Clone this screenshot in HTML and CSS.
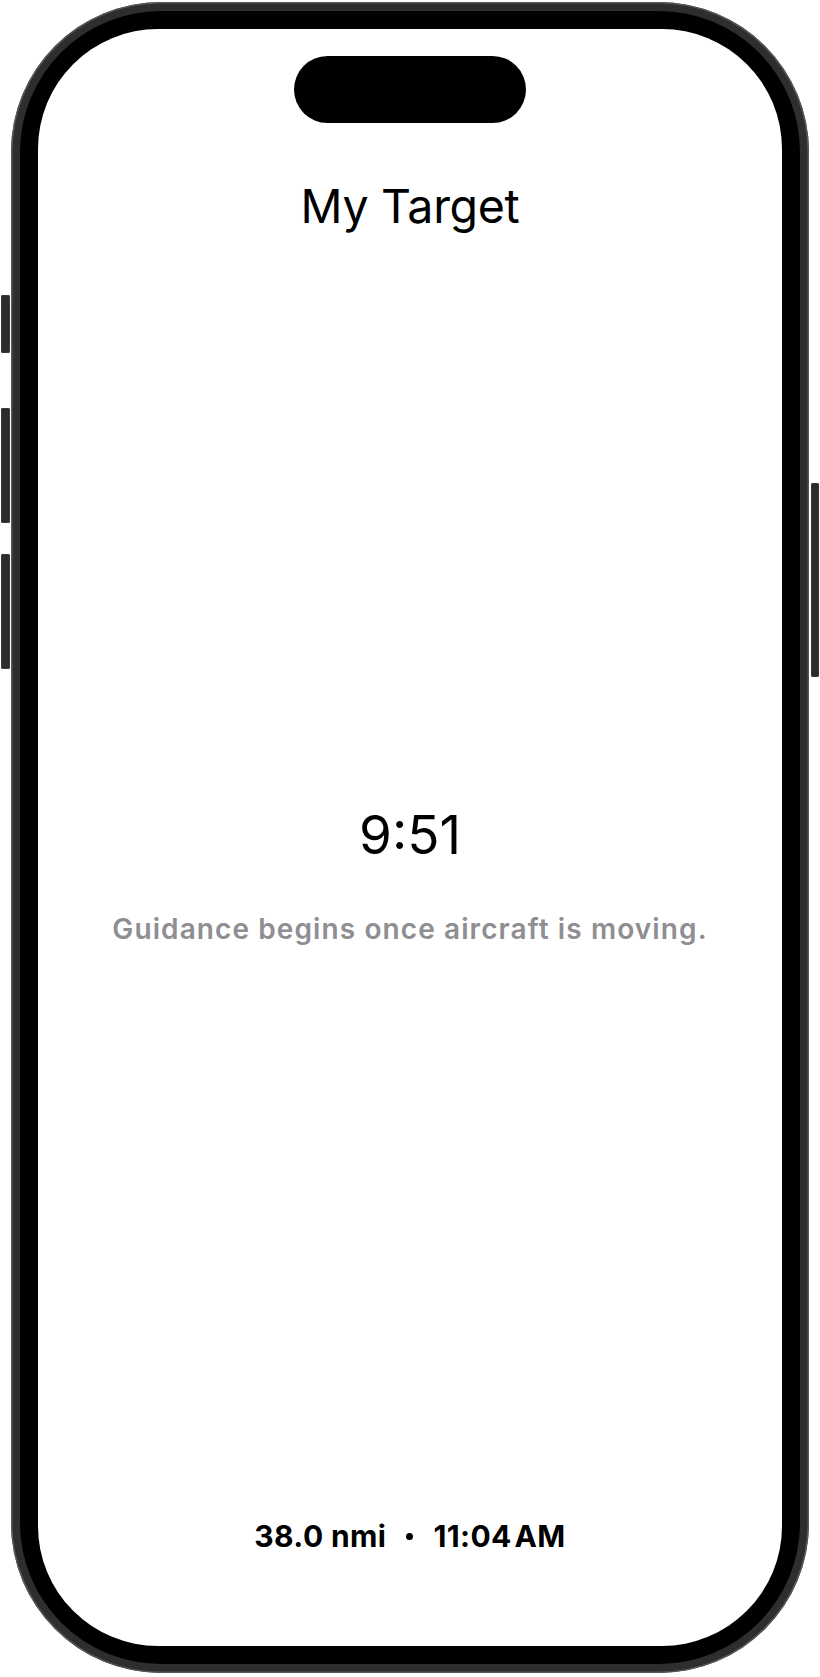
FILE: index.html
```html
<!DOCTYPE html>
<html lang="en">
<head>
<meta charset="utf-8">
<title>My Target</title>
<link rel="stylesheet" href="styles.css">
</head>
<body>
<div class="device">
  <span class="btn btn-action"></span>
  <span class="btn btn-vol-up"></span>
  <span class="btn btn-vol-down"></span>
  <span class="btn btn-power"></span>
  <div class="bezel">
    <div class="screen">
      <div class="island"></div>
      <h1 class="title">My Target</h1>
      <main class="main">
        <div class="countdown">9:51</div>
        <p class="hint">Guidance begins once aircraft is moving.</p>
      </main>
      <footer class="footer">
        <span>38.0 nmi</span>
        <span class="dot"></span>
        <span>11:04&#8202;AM</span>
      </footer>
    </div>
  </div>
</div>
</body>
</html>
```

FILE: styles.css
```css
html, body {
  margin: 0;
  padding: 0;
  background: #ffffff;
}

body {
  width: 820px;
  height: 1677px;
  font-family: "Inter", "Liberation Sans", sans-serif;
  padding-top: 2px;
  box-sizing: border-box;
}

.device {
  position: relative;
  margin-left: 11px;
  width: 798px;
  height: 1671px;
  box-sizing: border-box;
  padding: 9px;
  border-radius: 150px;
  background: #2e2e2e;
  box-shadow: inset 0 0 0 1.5px #575757;
}

.btn {
  position: absolute;
  background: #2c2c2c;
  border-radius: 2px;
  box-shadow: inset 0 0 0 1px #3a3a3a;
}
.btn-action { left: -10px; top: 293px; width: 9px; height: 58px; }
.btn-vol-up { left: -10px; top: 406px; width: 9px; height: 115px; }
.btn-vol-down { left: -10px; top: 552px; width: 9px; height: 115px; }
.btn-power { left: 800px; top: 481px; width: 8px; height: 194px; }

.bezel {
  height: 100%;
  box-sizing: border-box;
  padding: 18px;
  border-radius: 141px;
  background: #000000;
}

.screen {
  height: 100%;
  background: #ffffff;
  border-radius: 120px;
  display: flex;
  flex-direction: column;
  align-items: center;
  overflow: hidden;
}

.island {
  margin-top: 27px;
  width: 232px;
  height: 67px;
  border-radius: 34px;
  background: #000000;
  flex: none;
}

.title {
  margin: 60px 0 0;
  font-size: 46.5px;
  line-height: 46px;
  font-weight: 400;
  letter-spacing: -0.3px;
  color: #000000;
}

.main {
  flex: 1;
  display: flex;
  flex-direction: column;
  align-items: center;
  justify-content: center;
}

.countdown {
  font-size: 53px;
  line-height: 52px;
  font-weight: 400;
  color: #000000;
}

.hint {
  margin: 55px 0 0;
  font-size: 28px;
  line-height: 26px;
  font-weight: 600;
  letter-spacing: 1.1px;
  color: #8e8e93;
}

.footer {
  margin-bottom: 95px;
  display: flex;
  align-items: center;
  gap: 20px;
  font-size: 30px;
  line-height: 30px;
  font-weight: 700;
  letter-spacing: 0.4px;
  color: #000000;
}

.dot {
  width: 7px;
  height: 7px;
  border-radius: 50%;
  background: #000000;
}
```
